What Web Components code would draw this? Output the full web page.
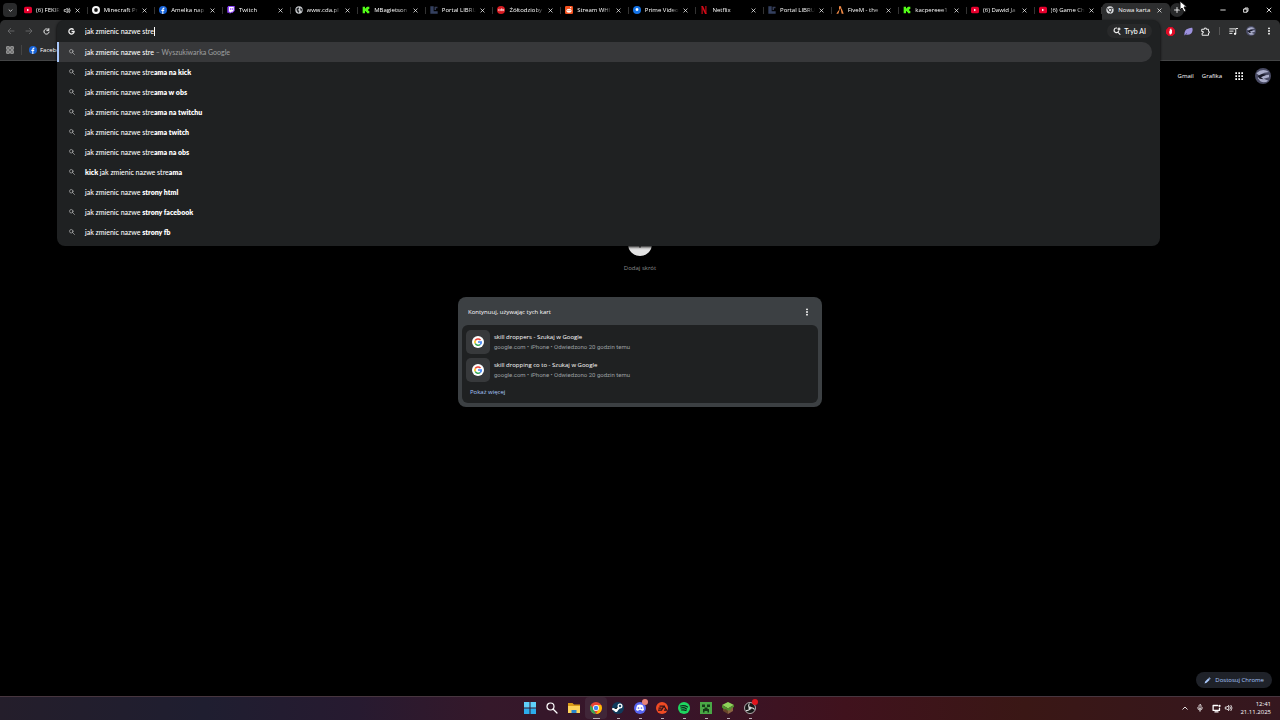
<!DOCTYPE html>
<html lang="pl">
<head>
<meta charset="utf-8">
<meta name="viewport" content="width=device-width, initial-scale=1">
<title>Nowa karta</title>
<style>
  html, body {
    margin: 0;
    height: 100%;
    background: #000;
  }

  body {
    display: flex;
    flex-direction: column;
    overflow: hidden;
    color: #fff;
    font-family: "Open Sans", "Noto Sans", sans-serif;
    font-size: 6px;
    font-weight: 500;
    line-height: 10px;
  }
</style>
</head>
<body>
<tab-strip></tab-strip>
<browser-toolbar></browser-toolbar>
<new-tab-page></new-tab-page>
<task-bar></task-bar>

<script>
// every icon is drawn on a 24x24 grid
const stroke = 'fill="none" stroke="currentColor" stroke-width="2.4" stroke-linecap="round" stroke-linejoin="round"';
const bold = stroke.replace("2.4", "3.4");
const icons = {
  close: `<path ${bold} d="M4 4l16 16M20 4L4 20"/>`,
  plus: `<path ${bold} d="M12 2v20M2 12h20"/>`,
  minus: `<path ${bold} d="M3 12h18"/>`,
  restore: `<path ${bold} d="M4 8h12v13H4zM8 8V4h12v13h-4"/>`,
  down: `<path ${bold} d="M5 9l7 7 7-7"/>`,
  up: `<path ${bold} d="M3 17l9-9 9 9"/>`,
  back: `<path ${stroke} d="M21 12H4M11 4l-8 8 8 8"/>`,
  forward: `<path ${stroke} d="M3 12h17M13 4l8 8-8 8"/>`,
  reload: `<path ${bold} d="M19 6a9 9 0 1 0 2 8M20 2v7h-7"/>`,
  search: `<circle cx="9" cy="9" r="7" ${stroke}/><path ${stroke} d="M14 14l8 8"/>`,
  dots: '<g fill="currentColor"><circle cx="12" cy="4" r="2.8"/><circle cx="12" cy="12" r="2.8"/><circle cx="12" cy="20" r="2.8"/></g>',
  sound: `<path ${stroke} d="M2 9h4l5-5v16l-5-5H2z"/><path ${stroke} d="M15 8q4 4 0 8M18 4q7 8 0 16"/>`,
  mic: `<rect x="9" y="2" width="6" height="12" rx="3" ${stroke}/><path ${stroke} d="M5 11q0 7 7 7t7-7M12 18v4"/>`,
  display: `<path ${bold} d="M15 4H3v13h17v-6M8 21h8"/><circle cx="20" cy="5" r="3" fill="currentColor"/>`,
  pencil: '<path fill="currentColor" d="M2 22l2-7L15 4l5 5L9 20zM16 3l2-2 5 5-2 2z"/>',
  apps: '<path fill="currentColor" d="M1 1h5v5H1zM10 1h5v5h-5zM19 1h5v5h-5zM1 10h5v5H1zM10 10h5v5h-5zM19 10h5v5h-5zM1 19h5v5H1zM10 19h5v5h-5zM19 19h5v5h-5z"/>',
  grid: '<g fill="#666" stroke="currentColor" stroke-width="3"><path d="M2 2h8v8H2zM14 2h8v8h-8zM2 14h8v8H2zM14 14h8v8h-8z"/></g>',
  google: '<path fill="none" stroke="currentColor" stroke-width="4.5" d="M19 6a9 9 0 1 0 2 6h-9"/>',
  googleColor: '<circle cx="12" cy="12" r="12" fill="#fff"/><g fill="none" stroke-width="3"><path stroke="#ea4335" d="M17 8A6.500 6.500 0 0 0 6.500 9"/><path stroke="#fbbc05" d="M6.500 9a6.500 6.500 0 0 0 0 6"/><path stroke="#34a853" d="M6.500 15a6.500 6.500 0 0 0 10 2"/><path stroke="#4285f4" d="M16.500 17a6 6 0 0 0 2-5H12"/></g>',
  aiSearch: `<path ${bold} d="M11 3a7 7 0 1 0 6 9M15 16l6 6"/><path fill="currentColor" d="M18 0l2 4 4 2-4 2-2 4-2-4-4-2 4-2z"/>`,
  youtube: '<rect y="2" width="24" height="20" rx="5" fill="#e5002d"/><path fill="#fff" d="M9 8l7 4-7 4z"/>',
  minecraftShop: '<circle cx="12" cy="12" r="12" fill="#f5f5f5"/><path fill="#111" d="M7 8l5-2 5 2v8l-5 2-5-2z"/>',
  facebook: '<circle cx="12" cy="12" r="12" fill="#1763d8"/><path fill="#fff" d="M10 24v-9H7v-4h3V9q0-5 6-4.500V8q-3-.3-3 2v1h3l-.6 4H13v9z"/>',
  twitch: '<path fill="#9146ff" d="M4 0h19v14l-6 6h-5l-4 4v-4H1V4z"/><path fill="#fff" d="M6 3h14v10l-4 4h-4l-3 3v-3H6z"/><path stroke="#9146ff" stroke-width="2.5" d="M11 6v6M16 6v6"/>',
  globe: '<circle cx="12" cy="12" r="11" fill="#c9cccf"/><path fill="#25282b" d="M4 8l6-4 3 3-4 5 4 3-2 6-5-5zM16 5l5 5-2 7-3-5z"/>',
  kick: '<path fill="#53fc18" d="M2 2h7v5h3V4h3V2h7v7h-3v6h3v7h-7v-3h-3v-3H9v6H2z"/>',
  libri: '<path fill="#34405f" d="M1 1h10v15h12v7H1z"/><path fill="#505b82" d="M14 2h3v10h-3zM19 2h3v5h-3z"/>',
  cda: '<circle cx="12" cy="12" r="12" fill="#d71920"/><path fill="none" stroke="#fff" stroke-width="2" d="M8 10q-4-1-4 2t4 2M14 7v7h-3q-2-2 0-4h3M20 14v-4h-3q-2 2 0 4z"/>',
  reddit: '<rect width="24" height="24" rx="4" fill="#f4511e"/><ellipse cx="12" cy="14" rx="8" ry="6" fill="#fff"/><circle cx="9" cy="13" r="1.700" fill="#f4511e"/><circle cx="15" cy="13" r="1.700" fill="#f4511e"/><circle cx="17" cy="5" r="2" fill="#fff"/>',
  prime: '<circle cx="12" cy="12" r="12" fill="#1473e6"/><path fill="#fff" d="M8 8q4-4 8 0v5q-4 4-8 0z"/>',
  netflix: '<path fill="#8d0710" d="M4 0h5v24H4zM15 0h5v24h-5z"/><path fill="#d50a18" d="M4 0h5l11 24h-5z"/>',
  fivem: '<path fill="#f28a45" d="M9 1h6l1 5-7 6zM7 14l4-3-4 12H1zM14 9l3-2 6 16h-6z"/>',
  chrome: '<circle cx="12" cy="12" r="11" fill="#d8dadd"/><g fill="none" stroke="#282a2c" stroke-width="2"><circle cx="12" cy="12" r="5"/><path d="M12 7h10M8 15L3 6M16 15l-5 8"/></g>',
  adblock: '<path fill="#e00b26" d="M7 0h10l7 7v10l-7 7H7l-7-7V7z"/><path fill="#fff" d="M8 12l2-1V6h2V4h2v3h2v9l-3 4h-3z"/>',
  leaf: '<path fill="#9c91dd" d="M1 22Q0 7 12 4q6-3 10-2 3 9-3 15-6 5-13 3z"/><path stroke="#5c5395" stroke-width="2" d="M2 22L8 16"/>',
  puzzle: `<path ${stroke} d="M3 6h6V3h5v3h6v6h2v4h-2v6H3v-6h3v-4H3z"/>`,
  music: `<path ${stroke} d="M2 5h13M2 11h9M2 17h6M18 18V4h5"/><circle cx="16" cy="18" r="3" fill="currentColor"/>`,
  avatar: '<circle cx="12" cy="12" r="12" fill="#494b64"/><path fill="#aaadc9" d="M2 8q9-9 19-2l-7 1-8 4zM8 12l13-2v4l-8 2 7 3q-6 4-12 1l-4-5z"/><path fill="#191a28" d="M4 12l7-3 6 1-8 4 4 3-6-1z"/>',
  windows: '<path fill="#5fd0fa" d="M0 0h11v11H0zM13 0h11v11H13z"/><path fill="#2cadec" d="M0 13h11v11H0zM13 13h11v11H13z"/>',
  folder: '<path fill="#d99a18" d="M0 2h9l3 3h12v16H0z"/><path fill="#ffd45b" d="M0 8h24v14H0z"/><path fill="#2784ce" d="M7 16h10v6H7z"/>',
  chromeColor: '<circle cx="12" cy="12" r="12" fill="#ea4335"/><path fill="#34a853" d="M1.600 6l6 10 4.400 8A12 12 0 0 1 1.600 6z"/><path fill="#fbbc05" d="M12 6h10.400A12 12 0 0 1 12 24l5-9z"/><circle cx="12" cy="12" r="6" fill="#fff"/><circle cx="12" cy="12" r="4.500" fill="#4285f4"/>',
  steam: '<circle cx="12" cy="12" r="12" fill="#103b5c"/><path stroke="#fff" stroke-width="4" stroke-linecap="round" d="M2 14l7 3 7-8"/><circle cx="16" cy="8" r="5" fill="#fff"/><circle cx="16" cy="8" r="2.500" fill="#244c6b"/><circle cx="8" cy="17" r="3" fill="#fff"/>',
  discord: '<circle cx="12" cy="12" r="12" fill="#5865f2"/><path fill="#fff" d="M7 6q5-2 10 0 3 4 3 10l-4 2-2-2h-4l-2 2-4-2q0-6 3-10z"/><circle cx="9" cy="12" r="1.700" fill="#5865f2"/><circle cx="15" cy="12" r="1.700" fill="#5865f2"/>',
  ea: '<circle cx="12" cy="12" r="12" fill="#f04b24"/><path fill="none" stroke="#2a1118" stroke-width="2.500" d="M7 8h7M5 12h6M4 16h7l5-8 5 8h-5"/>',
  spotify: '<circle cx="12" cy="12" r="12" fill="#1ed760"/><path fill="none" stroke="#10251a" stroke-width="2.400" stroke-linecap="round" d="M5 8q8-2 14 2M6 12q6-2 11 2M7 16q5-1 9 1"/>',
  creeper: '<path fill="#4aa746" d="M0 0h24v24H0z"/><path fill="#153a17" d="M4 5h6v5H4zM14 5h6v5h-6zM9 11h6v3h3v7h-3v-3H9v3H6v-7h3z"/>',
  grass: '<path fill="#8ed35a" d="M12 0l12 6-12 7L0 6z"/><path fill="#684529" d="M2 7l10 6v11L2 18z"/><path fill="#8a6442" d="M22 7l-10 6v11l10-6z"/><path fill="#4f922d" d="M0 6l12 7v5l-4-4-3 1-5-4zM24 6l-12 7v3l4 1 3-5 5-2z"/>',
  obs: '<circle cx="12" cy="12" r="11" fill="#171717" stroke="#ddd" stroke-width="1.500"/><g fill="none" stroke="#ddd" stroke-width="2.200"><path d="M12 12q-5-4-1-9M12 12q6-2 9 3M12 12q-1 6-8 5"/><circle cx="12" cy="12" r="2"/></g>'
};

// shared by all the elements below
class BaseElement extends HTMLElement {
  constructor() {
    super();
    this.attachShadow({ mode: "open" });
  }

  render(css, html) {
    this.shadowRoot.innerHTML = `
      <style>
        * { box-sizing: border-box; }
        button, a, input {
          margin: 0;
          padding: 0;
          border: 0;
          background: none;
          color: inherit;
          font: inherit;
          text-decoration: none;
          outline: none;
        }
        button { display: flex; align-items: center; justify-content: center; }
        ${css}
      </style>
      ${html}`;
  }
}

class UiIcon extends BaseElement {
  connectedCallback() {
    const size = this.getAttribute("size") || 8;
    this.render(`
      :host { display: block; flex: none; width: ${size}px; height: ${size}px; }
      svg { display: block; width: 100%; height: 100%; overflow: visible; }
    `, `<svg viewBox="0 0 24 24" aria-hidden="true">${icons[this.getAttribute("name")]}</svg>`);
  }
}

class BrowserTab extends BaseElement {
  connectedCallback() {
    const playing = this.hasAttribute("playing") ? '<ui-icon name="sound" size="7"></ui-icon>' : "";
    this.render(`
      :host {
        display: flex;
        flex: 1 1 0;
        min-width: 0;
        align-items: center;
        gap: 4px;
        height: 20px;
        padding: 0 8px 0 4px;
        background: linear-gradient(#333, #333) right center / 1px 7px no-repeat;
        box-sizing: border-box;
      }
      :host([active]) {
        height: 17px;
        margin-top: 3px;
        padding-bottom: 3px;
        border-radius: 5px 5px 0 0;
        background: #2d2e2f;
      }
      .title {
        flex: 1;
        min-width: 0;
        overflow: hidden;
        white-space: nowrap;
        -webkit-mask-image: linear-gradient(90deg, #000 75%, transparent);
        mask-image: linear-gradient(90deg, #000 75%, transparent);
      }
      :host([active]) .title { -webkit-mask-image: none; mask-image: none; }
    `, `
      <ui-icon name="${this.getAttribute("icon")}" size="8"></ui-icon>
      <span class="title"><slot></slot></span>
      ${playing}
      <button aria-label="Zamknij"><ui-icon name="close" size="5"></ui-icon></button>
    `);
  }
}

class TabStrip extends BaseElement {
  connectedCallback() {
    const tabs = [
      ["youtube", "(6) FEKIR", "playing"],
      ["minecraftShop", "Minecraft Pr"],
      ["facebook", "Amelka nap"],
      ["twitch", "Twitch"],
      ["globe", "www.cda.pl"],
      ["kick", "MBagietson"],
      ["libri", "Portal LIBRU"],
      ["cda", "Żółtodzioby"],
      ["reddit", "Stream WHI"],
      ["prime", "Prime Video"],
      ["netflix", "Netflix"],
      ["libri", "Portal LIBRU"],
      ["fivem", "FiveM - the"],
      ["kick", "kacpereee1"],
      ["youtube", "(6) Dawid Ja"],
      ["youtube", "(6) Game Ch"],
      ["chrome", "Nowa karta", "active"]
    ];
    this.render(`
      :host { display: flex; align-items: center; height: 20px; background: #000; }
      .list { display: flex; justify-content: center; width: 20px; }
      .list button { width: 14px; height: 14px; border-radius: 4px; background: #292a2b; }
      .tabs { display: flex; flex: 1; min-width: 0; }
      .controls { display: flex; align-items: center; width: 110px; }
      .add { width: 14px; height: 14px; border-radius: 7px; background: #28292a; }
      .window { display: flex; flex: 1; justify-content: flex-end; }
      .window button { width: 23px; height: 20px; }
      .pointer { position: absolute; top: 1px; right: 93px; width: 8px; height: 12px; }
    `, `
      <div class="list"><button aria-label="Szukaj kart"><ui-icon name="down" size="5"></ui-icon></button></div>
      <div class="tabs">
        ${tabs.map(([icon, title, state]) => `<browser-tab icon="${icon}" ${state || ""}>${title}</browser-tab>`).join("")}
      </div>
      <div class="controls">
        <button class="add" aria-label="Nowa karta"><ui-icon name="plus" size="6"></ui-icon></button>
        <div class="window">
          <button aria-label="Minimalizuj"><ui-icon name="minus" size="6"></ui-icon></button>
          <button aria-label="Przywróć"><ui-icon name="restore" size="6"></ui-icon></button>
          <button aria-label="Zamknij okno"><ui-icon name="close" size="6"></ui-icon></button>
        </div>
      </div>
      <svg class="pointer" viewBox="0 0 8 12"><path fill="#fff" stroke="#111" d="M1 0v9l2-2 2 4 2-1-2-4h3z"/></svg>
    `);
  }
}

class OmniBox extends BaseElement {
  connectedCallback() {
    const suggestions = [
      "jak zmienic nazwe stre<b>ama na kick</b>",
      "jak zmienic nazwe stre<b>ama w obs</b>",
      "jak zmienic nazwe stre<b>ama na twitchu</b>",
      "jak zmienic nazwe stre<b>ama twitch</b>",
      "jak zmienic nazwe stre<b>ama na obs</b>",
      "<b>kick</b> jak zmienic nazwe stre<b>ama</b>",
      "jak zmienic nazwe <b>strony html</b>",
      "jak zmienic nazwe <b>strony facebook</b>",
      "jak zmienic nazwe <b>strony fb</b>"
    ];
    this.render(`
      :host {
        display: block;
        position: relative;
        flex: 1;
        min-width: 0;
        font-family: Lato, "Open Sans", sans-serif;
        font-size: 7px;
      }
      .popup {
        position: absolute;
        z-index: 2;
        top: 0;
        left: 0;
        right: 0;
        padding-bottom: 4px;
        border-radius: 8px;
        background: #1f2122;
        box-shadow: 0 1px 3px #000;
      }
      .field { display: flex; align-items: center; height: 22px; padding: 0 8px 0 11px; }
      .entry { display: flex; flex: 1; align-items: center; margin-left: 10px; }
      input { min-width: 10px; field-sizing: content; }
      .caret { width: 1px; height: 9px; background: #fff; }
      .ai { gap: 3px; height: 14px; padding: 0 6px; border-radius: 7px; background: #28292a; }
      ul { margin: 0; padding: 0; list-style: none; }
      li { display: flex; align-items: center; gap: 10px; height: 20px; padding-left: 12px; white-space: nowrap; }
      li.selected {
        margin-right: 8px;
        border-left: 2px solid #a8c7fa;
        border-radius: 0 10px 10px 0;
        padding-left: 10px;
        background: #37383a;
      }
      b { font-weight: 800; }
      ui-icon { color: #c7c7c7; }
      .field ui-icon { color: #eee; }
      small { color: #9a9b9c; font-size: inherit; }
    `, `
      <div class="popup">
        <div class="field">
          <ui-icon name="google" size="7"></ui-icon>
          <div class="entry">
            <input aria-label="Adres i wyszukiwanie" value="jak zmienic nazwe stre"><span class="caret"></span>
          </div>
          <button class="ai"><ui-icon name="aiSearch" size="8"></ui-icon>Tryb AI</button>
        </div>
        <ul>
          <li class="selected"><ui-icon name="search" size="6"></ui-icon><span>jak zmienic nazwe stre<small> – Wyszukiwarka Google</small></span></li>
          ${suggestions.map(text => `<li><ui-icon name="search" size="6"></ui-icon><span>${text}</span></li>`).join("")}
        </ul>
      </div>
    `);
  }
}

class BrowserToolbar extends BaseElement {
  connectedCallback() {
    this.render(`
      :host {
        display: flex;
        height: 41px;
        box-sizing: border-box;
        border-bottom: 1px solid #444546;
        border-radius: 5px 5px 0 0;
        background: #2d2e2f;
      }
      .left { width: 57px; }
      .nav { display: flex; align-items: center; height: 22px; padding-left: 7px; gap: 10px; }
      .nav button { color: #707172; }
      .nav button:last-child { color: #eee; }
      .bookmarks { display: flex; align-items: center; height: 16px; padding-left: 6px; gap: 7px; }
      .bookmarks button { color: #a0a0a0; }
      .bookmarks a { display: flex; align-items: center; gap: 3px; padding-left: 7px; border-left: 1px solid #444; }
      .right {
        display: flex;
        align-items: center;
        justify-content: space-between;
        width: 120px;
        height: 22px;
        padding: 0 7px 0 6px;
      }
      .line { width: 1px; height: 8px; background: #555; }
    `, `
      <div class="left">
        <div class="nav">
          <button aria-label="Wstecz"><ui-icon name="back" size="8"></ui-icon></button>
          <button aria-label="Dalej"><ui-icon name="forward" size="8"></ui-icon></button>
          <button aria-label="Odśwież"><ui-icon name="reload" size="7"></ui-icon></button>
        </div>
        <div class="bookmarks">
          <button aria-label="Grupy kart"><ui-icon name="grid" size="8"></ui-icon></button>
          <a href="#"><ui-icon name="facebook" size="8"></ui-icon>Facebo</a>
        </div>
      </div>
      <omni-box></omni-box>
      <div class="right">
        <button aria-label="AdBlock"><ui-icon name="adblock" size="9"></ui-icon></button>
        <button aria-label="Rozszerzenie"><ui-icon name="leaf" size="9"></ui-icon></button>
        <button aria-label="Rozszerzenia"><ui-icon name="puzzle" size="9"></ui-icon></button>
        <span class="line"></span>
        <button aria-label="Multimedia"><ui-icon name="music" size="9"></ui-icon></button>
        <button aria-label="Profil"><ui-icon name="avatar" size="10"></ui-icon></button>
        <button aria-label="Menu"><ui-icon name="dots" size="8"></ui-icon></button>
      </div>
    `);
  }
}

class TabsCard extends BaseElement {
  connectedCallback() {
    const pages = ["skill droppers - Szukaj w Google", "skill dropping co to - Szukaj w Google"];
    this.render(`
      :host {
        display: block;
        width: 364px;
        max-width: 100%;
        padding: 0 4px 4px;
        border-radius: 8px;
        background: #3c4043;
        box-sizing: border-box;
      }
      header { display: flex; align-items: center; justify-content: space-between; height: 28px; padding: 2px 7px 0 6px; }
      h2 { margin: 0; font: inherit; }
      .list { padding: 3px 4px 6px; border-radius: 6px; background: #1f2122; }
      .page { display: flex; align-items: center; gap: 4px; height: 28px; }
      .thumb { display: flex; align-items: center; justify-content: center; width: 24px; height: 24px; border-radius: 5px; background: #37393b; }
      .text { display: block; line-height: 9px; }
      small { display: block; color: #9da0a2; font-family: Roboto, sans-serif; font-size: 6px; font-weight: 400; }
      .more { display: inline-block; padding: 3px 4px 0; color: #a8c7fa; }
    `, `
      <header><h2>Kontynuuj, używając tych kart</h2><button aria-label="Więcej"><ui-icon name="dots" size="8"></ui-icon></button></header>
      <div class="list">
        ${pages.map(title => `
          <a class="page" href="#">
            <span class="thumb"><ui-icon name="googleColor" size="12"></ui-icon></span>
            <span class="text">${title}<small>google.com • iPhone • Odwiedzono 20 godzin temu</small></span>
          </a>`).join("")}
        <a class="more" href="#">Pokaż więcej</a>
      </div>
    `);
  }
}

class NewTabPage extends BaseElement {
  connectedCallback() {
    this.render(`
      :host { display: flex; flex: 1; min-height: 0; flex-direction: column; background: #000; }
      nav { display: flex; align-items: center; justify-content: flex-end; height: 30px; padding-right: 9px; }
      nav a { margin-right: 8px; }
      nav button { margin-left: 5px; }
      nav button:last-child { margin-left: 12px; }
      main { display: flex; flex: 1; flex-direction: column; align-items: center; padding-top: 141px; }
      .shortcut { display: flex; flex-direction: column; align-items: center; gap: 7px; margin-bottom: 24px; color: #8c8d8e; }
      .circle { display: flex; align-items: center; justify-content: center; width: 24px; height: 24px; border-radius: 12px; background: #e4e4e4; color: #333; }
      footer { display: flex; justify-content: flex-end; padding: 0 8px 8px; }
      footer button { gap: 4px; height: 16px; padding: 0 8px; border-radius: 8px; background: #1f2229; color: #a8c7fa; }
    `, `
      <nav>
        <a href="#">Gmail</a>
        <a href="#">Grafika</a>
        <button aria-label="Aplikacje Google"><ui-icon name="apps" size="8"></ui-icon></button>
        <button aria-label="Konto Google"><ui-icon name="avatar" size="16"></ui-icon></button>
      </nav>
      <main>
        <button class="shortcut"><span class="circle"><ui-icon name="plus" size="8"></ui-icon></span>Dodaj skrót</button>
        <tabs-card></tabs-card>
      </main>
      <footer><button><ui-icon name="pencil" size="7"></ui-icon>Dostosuj Chrome</button></footer>
    `);
  }
}

class TaskBar extends BaseElement {
  connectedCallback() {
    const apps = [
      ["windows", "Start"], ["search", "Szukaj"], ["folder", "Eksplorator plików"],
      ["chromeColor", "Chrome", "current"], ["steam", "Steam", "open"], ["discord", "Discord", "open badge"],
      ["ea", "EA", "open"], ["spotify", "Spotify", "open"], ["creeper", "Minecraft", "open"],
      ["grass", "Minecraft Launcher", "open"], ["obs", "OBS Studio", "open rec"]
    ];
    this.render(`
      :host {
        display: grid;
        grid-template-columns: 1fr auto 1fr;
        align-items: start;
        height: 24px;
        box-sizing: border-box;
        border-top: 1px solid #47363f;
        background: linear-gradient(90deg, #241e2b, #1f1e30 16%, #271a30 28%, #35182a 38%, #38152a 52%, #40121d 66%, #3a1715 80%, #35171f);
      }
      .apps { display: flex; grid-column: 2; }
      .apps button { position: relative; width: 22px; height: 22px; border-radius: 4px; }
      .current { background: #402638; }
      .open::after, .current::after {
        content: "";
        position: absolute;
        bottom: 0;
        left: 10px;
        width: 3px;
        height: 1px;
        background: #b9adb5;
      }
      .current::after { left: 8px; width: 7px; }
      .badge::before, .rec::before {
        content: "";
        position: absolute;
        z-index: 1;
        top: 2px;
        right: 3px;
        width: 6px;
        height: 6px;
        border-radius: 3px;
        background: #e1141c;
      }
      .badge::before { background: #e88378; }
      .tray { display: flex; align-items: center; justify-content: flex-end; gap: 4px; height: 22px; padding-right: 9px; }
      .tray button:first-child, .tray button:nth-child(2) { margin-right: 4px; }
      .clock { margin-left: 3px; line-height: 8px; text-align: right; }
      .clock span { display: block; }
    `, `
      <div class="apps">
        ${apps.map(([icon, label, state]) => `<button class="${state || ""}" aria-label="${label}"><ui-icon name="${icon}" size="12"></ui-icon></button>`).join("")}
      </div>
      <div class="tray">
        <button aria-label="Ukryte ikony"><ui-icon name="up" size="6"></ui-icon></button>
        <button aria-label="Mikrofon"><ui-icon name="mic" size="8"></ui-icon></button>
        <button aria-label="Sieć"><ui-icon name="display" size="9"></ui-icon></button>
        <button aria-label="Głośność"><ui-icon name="sound" size="8"></ui-icon></button>
        <div class="clock"><span>12:41</span><span>21.11.2025</span></div>
      </div>
    `);
  }
}

customElements.define("ui-icon", UiIcon);
customElements.define("browser-tab", BrowserTab);
customElements.define("tab-strip", TabStrip);
customElements.define("omni-box", OmniBox);
customElements.define("browser-toolbar", BrowserToolbar);
customElements.define("tabs-card", TabsCard);
customElements.define("new-tab-page", NewTabPage);
customElements.define("task-bar", TaskBar);
</script>
</body>
</html>
